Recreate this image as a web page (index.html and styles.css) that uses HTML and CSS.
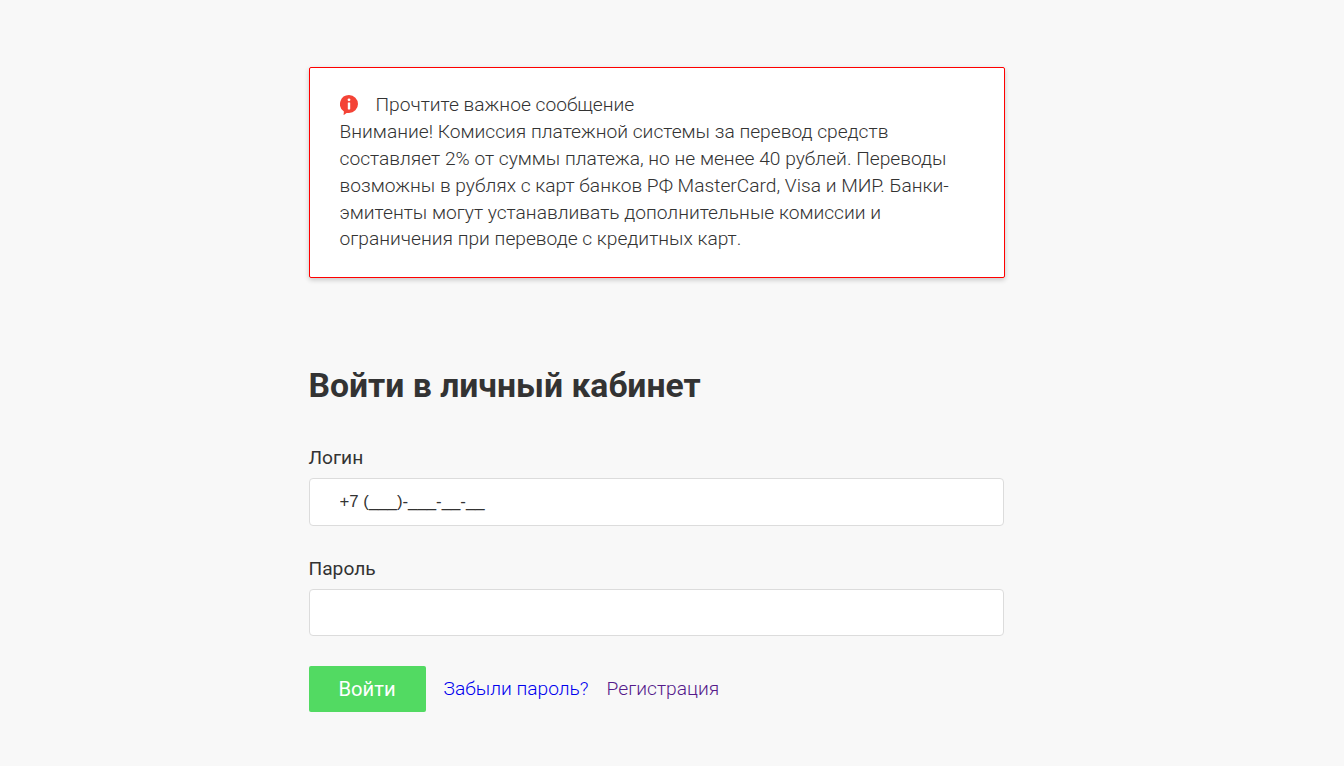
FILE: index.html
```html
<!DOCTYPE html>
<html lang="ru">
<head>
    <meta charset="UTF-8">
    <meta name="viewport" content="width=device-width, initial-scale=1.0">
    <title>Войти в личный кабинет</title>
    <link rel="stylesheet" href="styles.css">
</head>
<body>
    <div class="container">
        <div class="alert">
            <div class="alert-title">
                <svg class="alert-icon" viewBox="0 0 18 20" width="18" height="20">
                    <path fill="#f44336" d="M9 0a9 9 0 0 1 0 18H6.6L3.6 20.2 3.9 16.4A9 9 0 0 1 9 0z"/>
                    <circle fill="#fff" cx="9" cy="4.8" r="1.4"/>
                    <rect fill="#fff" x="7.8" y="7.4" width="2.4" height="7" rx="0.4"/>
                </svg>
                <span>Прочтите важное сообщение</span>
            </div>
            <p>Внимание! Комиссия платежной системы за перевод средств составляет 2% от суммы платежа, но не менее 40 рублей. Переводы возможны в рублях с карт банков РФ MasterCard, Visa и МИР. Банки-эмитенты могут устанавливать дополнительные комиссии и ограничения при переводе с кредитных карт.</p>
        </div>

        <h1>Войти в личный кабинет</h1>

        <form class="login-form">
            <label class="field">
                <span class="field-label">Логин</span>
                <input class="field-input" type="text" value="+7 (___)-___-__-__">
            </label>
            <label class="field">
                <span class="field-label">Пароль</span>
                <input class="field-input" type="password">
            </label>
            <div class="actions">
                <button class="login-button" type="button">Войти</button>
                <a class="link" href="#">Забыли пароль?</a>
                <a class="link link-visited" href="#">Регистрация</a>
            </div>
        </form>
    </div>
</body>
</html>
```

FILE: styles.css
```css
body {
    font-family: 'Roboto', 'Liberation Sans', sans-serif;
    margin: 0;
    background-color: #f8f8f8;
    color: #333;
}

.container {
    width: 696px;
    margin: 67px 0 0 308.5px;
}

.alert {
    background-color: #ffffff;
    border: 1px solid #ff0000;
    border-radius: 2px;
    box-shadow: 0 2px 5px rgba(0, 0, 0, 0.2);
    padding: 24px 30px 23px;
    font-size: 19.2px;
    font-weight: 300;
    line-height: 1.4;
    height: 162px;
}

.alert-title {
    display: flex;
    align-items: center;
    gap: 18px;
}

.alert-icon {
    flex: none;
}

.alert p {
    margin: 0;
}

h1 {
    font-size: 33.7px;
    font-weight: 700;
    line-height: 38px;
    margin: 89px 0 0;
}

.login-form {
    margin-top: 39.4px;
}

.field {
    display: block;
    margin-bottom: 29.2px;
}

.field-label {
    display: block;
    font-size: 19.2px;
    line-height: 27px;
    margin-bottom: 7px;
}

.field-input {
    display: block;
    width: 695px;
    height: 47.4px;
    box-sizing: border-box;
    padding: 0 30px;
    font-family: 'Liberation Sans', Arial, sans-serif;
    font-size: 16.8px;
    color: #333;
    background-color: #ffffff;
    border: 1px solid #dcdcdc;
    border-radius: 4px;
    outline: none;
}

.actions {
    display: flex;
    align-items: center;
    gap: 18px;
    padding-top: 0.5px;
}

.login-button {
    width: 117px;
    height: 46px;
    font-family: inherit;
    font-size: 20.2px;
    color: #ffffff;
    background-color: #52da62;
    border: none;
    border-radius: 2px;
    cursor: pointer;
}

.link {
    font-size: 19.2px;
    font-weight: 300;
    color: #0000ee;
    text-decoration: none;
    padding-bottom: 2px;
}

.link-visited {
    color: #551a8b;
}
```
